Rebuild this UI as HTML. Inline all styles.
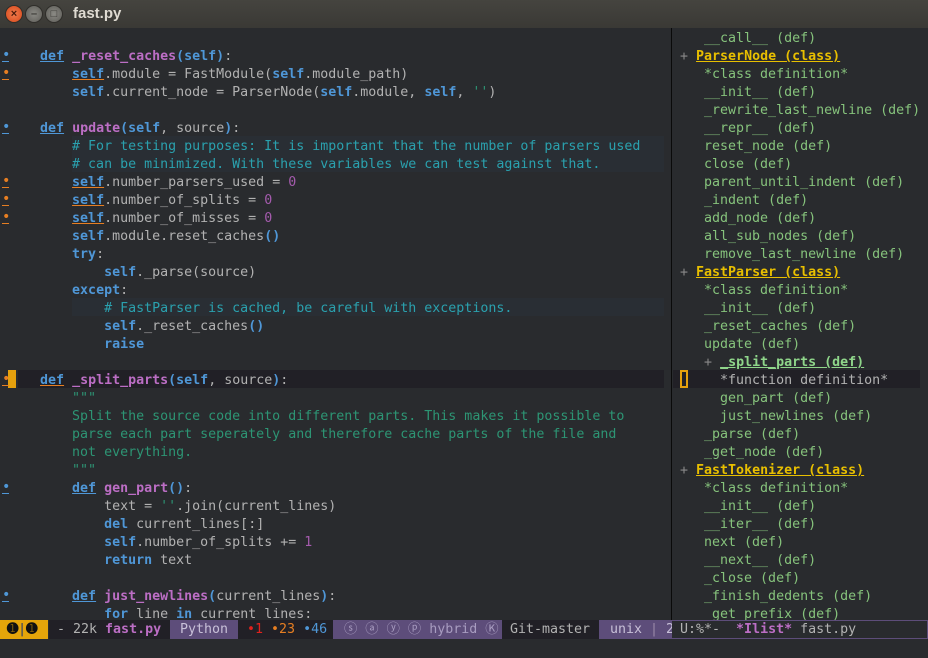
<!DOCTYPE html>
<html><head><meta charset="utf-8"><style>
*{margin:0;padding:0;box-sizing:border-box}
body{width:928px;height:658px;background:#292b2e;overflow:hidden;position:relative;font-family:"DejaVu Sans Mono","Liberation Mono",monospace;font-size:13.3px;color:#b2b2b2}
#title{position:absolute;left:0;top:0;width:928px;height:28px;background:linear-gradient(#45443f,#3a3935);}
#title .t{position:absolute;left:73px;top:5px;font-family:"Liberation Sans",sans-serif;font-weight:bold;font-size:15px;color:#dfdbd2}
.btn{position:absolute;top:5px;width:18px;height:18px;border-radius:50%;background:radial-gradient(#8b8a85,#5d5c57);border:1px solid #2f2e2a;color:#3a3935;font-size:11px;line-height:16px;text-align:center;font-family:"Liberation Sans",sans-serif;font-weight:bold}
.l{position:absolute;left:8px;height:18px;line-height:18px;white-space:pre;transform:translateY(2px)}
.r{position:absolute;left:680px;height:18px;line-height:18px;white-space:pre;color:#86c37c;transform:translateY(2px)}
.k{color:#4f97d7;font-weight:bold}
.kf{color:#4f97d7;font-weight:bold;text-decoration:underline;text-decoration-color:#4f97d7}
.ko{color:#4f97d7;font-weight:bold;text-decoration:underline;text-decoration-color:#e67e22}
.f{color:#bc6ec5;font-weight:bold}
.c{color:#2aa1ae}
.s{color:#2d9574}
.n{color:#a45bad}
.cm{position:absolute;left:72px;width:592px;height:18px;background:#292e34}
.dot{position:absolute;left:2px;width:7px;height:16px;font-size:14px;line-height:18px;border-bottom:1px solid;text-align:center}
.cls{color:#e8bf00;font-weight:bold;text-decoration:underline}
.p{color:#8a8a8a}
.ml{position:absolute;top:620px;height:19px;line-height:19px;white-space:pre}
</style></head><body>
<div id="title">
<div class="btn" style="left:5px;background:radial-gradient(#f07c4e,#d8481a);color:#4a1a0a">×</div>
<div class="btn" style="left:25px">–</div>
<div class="btn" style="left:45px">□</div>
<div class="t">fast.py</div>
</div>
<div style="position:absolute;left:18px;top:370px;width:646px;height:18px;background:#212026"></div>
<div class="cm" style="top:136px"></div><div class="cm" style="top:154px"></div><div class="cm" style="top:298px"></div>
<div style="position:absolute;left:671px;top:28px;width:1px;height:592px;background:#0a0a0a"></div>
<div style="position:absolute;left:673px;top:370px;width:247px;height:18px;background:#212026"></div>
<div style="position:absolute;left:680px;top:370px;width:8px;height:18px;border:2px solid #e5a00d"></div>
<div style="position:absolute;left:8px;top:370px;width:8px;height:18px;background:#e5a00d"></div>

<div class="dot" style="top:46px;color:#4f97d7">•</div>
<div class="dot" style="top:64px;color:#e67e22">•</div>
<div class="dot" style="top:118px;color:#4f97d7">•</div>
<div class="dot" style="top:172px;color:#e67e22">•</div>
<div class="dot" style="top:190px;color:#e67e22">•</div>
<div class="dot" style="top:208px;color:#e67e22">•</div>
<div class="dot" style="top:370px;color:#e67e22">•</div>
<div class="dot" style="top:478px;color:#4f97d7">•</div>
<div class="dot" style="top:586px;color:#4f97d7">•</div>

<div class="l" style="top:46px">    <span class="kf">def</span> <span class="f">_reset_caches</span><span class="k">(self)</span>:</div>
<div class="l" style="top:64px">        <span class="ko">self</span>.module = FastModule(<span class="k">self</span>.module_path)</div>
<div class="l" style="top:82px">        <span class="k">self</span>.current_node = ParserNode(<span class="k">self</span>.module, <span class="k">self</span>, <span class="s">''</span>)</div>
<div class="l" style="top:118px">    <span class="kf">def</span> <span class="f">update</span><span class="k">(self</span>, source<span class="k">)</span>:</div>
<div class="l c" style="top:136px">        # For testing purposes: It is important that the number of parsers used</div>
<div class="l c" style="top:154px">        # can be minimized. With these variables we can test against that.</div>
<div class="l" style="top:172px">        <span class="ko">self</span>.number_parsers_used = <span class="n">0</span></div>
<div class="l" style="top:190px">        <span class="ko">self</span>.number_of_splits = <span class="n">0</span></div>
<div class="l" style="top:208px">        <span class="ko">self</span>.number_of_misses = <span class="n">0</span></div>
<div class="l" style="top:226px">        <span class="k">self</span>.module.reset_caches<span class="k">()</span></div>
<div class="l" style="top:244px">        <span class="k">try</span>:</div>
<div class="l" style="top:262px">            <span class="k">self</span>._parse(source)</div>
<div class="l" style="top:280px">        <span class="k">except</span>:</div>
<div class="l c" style="top:298px">            # FastParser is cached, be careful with exceptions.</div>
<div class="l" style="top:316px">            <span class="k">self</span>._reset_caches<span class="k">()</span></div>
<div class="l" style="top:334px">            <span class="k">raise</span></div>
<div class="l" style="top:370px">    <span class="ko">def</span> <span class="f">_split_parts</span><span class="k">(self</span>, source<span class="k">)</span>:</div>
<div class="l s" style="top:388px">        """</div>
<div class="l s" style="top:406px">        Split the source code into different parts. This makes it possible to</div>
<div class="l s" style="top:424px">        parse each part seperately and therefore cache parts of the file and</div>
<div class="l s" style="top:442px">        not everything.</div>
<div class="l s" style="top:460px">        """</div>
<div class="l" style="top:478px">        <span class="kf">def</span> <span class="f">gen_part</span><span class="k">()</span>:</div>
<div class="l" style="top:496px">            text = <span class="s">''</span>.join(current_lines)</div>
<div class="l" style="top:514px">            <span class="k">del</span> current_lines[:]</div>
<div class="l" style="top:532px">            <span class="k">self</span>.number_of_splits += <span class="n">1</span></div>
<div class="l" style="top:550px">            <span class="k">return</span> text</div>
<div class="l" style="top:586px">        <span class="kf">def</span> <span class="f">just_newlines</span><span class="k">(</span>current_lines<span class="k">)</span>:</div>
<div class="l" style="top:604px">            <span class="k">for</span> line <span class="k">in</span> current lines:</div>

<div class="r" style="top:28px">   __call__ (def)</div>
<div class="r" style="top:46px"><span class="p">+</span> <span class="cls">ParserNode (class)</span></div>
<div class="r" style="top:64px">   *class definition*</div>
<div class="r" style="top:82px">   __init__ (def)</div>
<div class="r" style="top:100px">   _rewrite_last_newline (def)</div>
<div class="r" style="top:118px">   __repr__ (def)</div>
<div class="r" style="top:136px">   reset_node (def)</div>
<div class="r" style="top:154px">   close (def)</div>
<div class="r" style="top:172px">   parent_until_indent (def)</div>
<div class="r" style="top:190px">   _indent (def)</div>
<div class="r" style="top:208px">   add_node (def)</div>
<div class="r" style="top:226px">   all_sub_nodes (def)</div>
<div class="r" style="top:244px">   remove_last_newline (def)</div>
<div class="r" style="top:262px"><span class="p">+</span> <span class="cls">FastParser (class)</span></div>
<div class="r" style="top:280px">   *class definition*</div>
<div class="r" style="top:298px">   __init__ (def)</div>
<div class="r" style="top:316px">   _reset_caches (def)</div>
<div class="r" style="top:334px">   update (def)</div>
<div class="r" style="top:352px">   <span class="p">+</span> <span style="font-weight:bold;text-decoration:underline;color:#8fd68a">_split_parts (def)</span></div>
<div class="r" style="top:370px;color:#b2b2b2">     *function definition*</div>
<div class="r" style="top:388px">     gen_part (def)</div>
<div class="r" style="top:406px">     just_newlines (def)</div>
<div class="r" style="top:424px">   _parse (def)</div>
<div class="r" style="top:442px">   _get_node (def)</div>
<div class="r" style="top:460px"><span class="p">+</span> <span class="cls">FastTokenizer (class)</span></div>
<div class="r" style="top:478px">   *class definition*</div>
<div class="r" style="top:496px">   __init__ (def)</div>
<div class="r" style="top:514px">   __iter__ (def)</div>
<div class="r" style="top:532px">   next (def)</div>
<div class="r" style="top:550px">   __next__ (def)</div>
<div class="r" style="top:568px">   _close (def)</div>
<div class="r" style="top:586px">   _finish_dedents (def)</div>
<div class="r" style="top:604px">   _get_prefix (def)</div>

<div class="ml" style="left:0;width:48px;background:#e5a50a;color:#111;font-weight:bold;padding-left:7px">➊<span style="color:#555">|</span>➊</div>
<div class="ml" style="left:49px;width:121px;background:#212026;color:#b2b2b2;padding-left:8px">- 22k <span class="f">fast.py</span></div>
<div class="ml" style="left:170px;width:502px;background:#5d4d7a"></div>
<div class="ml" style="left:172px;width:64px;color:#c8c0d8;padding-left:8px">Python</div>
<div class="ml" style="left:238px;width:95px;background:#212026;padding-left:9px"><span style="color:#e0211d">•1</span> <span style="color:#e67e22">•23</span> <span style="color:#4f97d7">•46</span></div>
<div class="ml" style="left:336px;width:166px;color:#a89cc0;padding-left:8px">ⓢ ⓐ ⓨ ⓟ hybrid Ⓚ</div>
<div class="ml" style="left:502px;width:97px;background:#212026;color:#b2b2b2;padding-left:8px">Git-master</div>
<div class="ml" style="left:600px;width:72px;color:#c8c0d8;padding-left:10px">unix <span style="color:#9a8aa8">|</span> 2</div>
<div class="ml" style="left:672px;width:256px;background:#292b2e;border:1px solid #5d4d7a;border-left:none;line-height:17px;color:#b2b2b2;padding-left:8px">U:%*-  <span class="f">*Ilist*</span> fast.py</div>
</body></html>
